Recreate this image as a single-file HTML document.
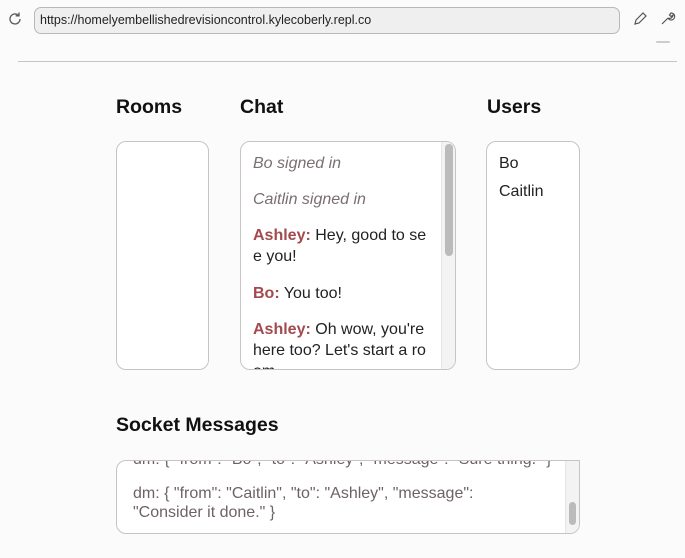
<!DOCTYPE html>
<html><head><style>
*{margin:0;padding:0;box-sizing:border-box}
body{width:685px;height:558px;background:#fbfbfb;font-family:"Liberation Sans","DejaVu Sans",sans-serif;position:relative;overflow:hidden;color:#222}
.abs{position:absolute}
.url{left:34px;top:7px;width:586px;height:27px;border:1px solid #b8b8b8;border-radius:7px;background:#efefef;font-size:12.5px;line-height:25px;padding-left:5px;color:#222}
h2{position:absolute;font-size:19.5px;font-weight:bold;color:#111}
.box{position:absolute;border:1px solid #c8c4c4;border-radius:10px;background:#fff;overflow:hidden}
.t{position:absolute;font-size:16px;white-space:nowrap;line-height:21px}
.i{font-style:italic;color:#7a6e70}
.n{color:#a34a4e;font-weight:bold}
</style></head><body>
<svg class="abs" style="left:7px;top:11px" width="16" height="16" viewBox="0 0 16 16"><path d="M13 8a5 5 0 1 1-1.6-3.7" fill="none" stroke="#555" stroke-width="1.3"/><path d="M12 1.5v3.3H8.7" fill="none" stroke="#555" stroke-width="1.3"/></svg>
<div class="abs url">https://homelyembellishedrevisioncontrol.kylecoberly.repl.co</div>
<svg class="abs" style="left:632px;top:11px" width="16" height="16" viewBox="0 0 16 16"><path d="M3 13l1-4 7-7 3 3-7 7z" fill="none" stroke="#555" stroke-width="1.2"/></svg>
<svg class="abs" style="left:659px;top:10px" width="17" height="17" viewBox="0 0 17 17"><path d="M3 14l6-6M9 8a3.5 3.5 0 1 0 3-5l-1.5 2 1.5 1.5 2-1.5a3.5 3.5 0 0 1-5 3" fill="none" stroke="#555" stroke-width="1.2"/></svg>
<div class="abs" style="left:656px;top:41px;width:14px;height:2px;background:#ccc;border-radius:1px"></div>
<div class="abs" style="left:18px;top:61px;width:659px;height:1px;background:#c8c4c4"></div>

<h2 style="left:116px;top:96px">Rooms</h2>
<h2 style="left:240px;top:96px">Chat</h2>
<h2 style="left:487px;top:96px">Users</h2>

<div class="box" style="left:116px;top:141px;width:93px;height:229px"></div>

<div class="box" style="left:240px;top:141px;width:216px;height:229px">
<div class="abs" style="left:200px;top:0;width:15px;height:229px;background:#f3f3f3;border-left:1px solid #e6e6e6"></div>
<div class="abs" style="left:204px;top:2px;width:8px;height:112px;background:#bbb;border-radius:4px"></div>
<div class="t i" style="left:12px;top:11px">Bo signed in</div>
<div class="t i" style="left:12px;top:47px">Caitlin signed in</div>
<div class="t" style="left:12px;top:83px"><span class="n">Ashley:</span> Hey, good to se</div>
<div class="t" style="left:12px;top:104px">e you!</div>
<div class="t" style="left:12px;top:141px"><span class="n">Bo:</span> You too!</div>
<div class="t" style="left:12px;top:177px"><span class="n">Ashley:</span> Oh wow, you're</div>
<div class="t" style="left:12px;top:198px">here too? Let's start a ro</div>
<div class="t" style="left:12px;top:219px">om</div>
</div>

<div class="box" style="left:486px;top:141px;width:94px;height:229px">
<div class="t" style="left:12px;top:11px">Bo</div>
<div class="t" style="left:12px;top:39px">Caitlin</div>
</div>

<h2 style="left:116px;top:414px">Socket Messages</h2>
<div class="box" style="left:116px;top:460px;width:464px;height:74px;border-top-right-radius:0">
<div class="abs" style="left:448px;top:0;width:15px;height:74px;background:#f3f3f3;border-left:1px solid #e6e6e6"></div>
<div class="abs" style="left:452px;top:41px;width:7px;height:23px;background:#bbb;border-radius:4px"></div>
<div class="t" style="left:16px;top:-12px;color:#6e6264">dm: { "from": "Bo", "to": "Ashley", "message": "Sure thing." }</div>
<div class="t" style="left:16px;top:22px;color:#6e6264">dm: { "from": "Caitlin", "to": "Ashley", "message":</div>
<div class="t" style="left:16px;top:41px;color:#6e6264">"Consider it done." }</div>
</div>
</body></html>
